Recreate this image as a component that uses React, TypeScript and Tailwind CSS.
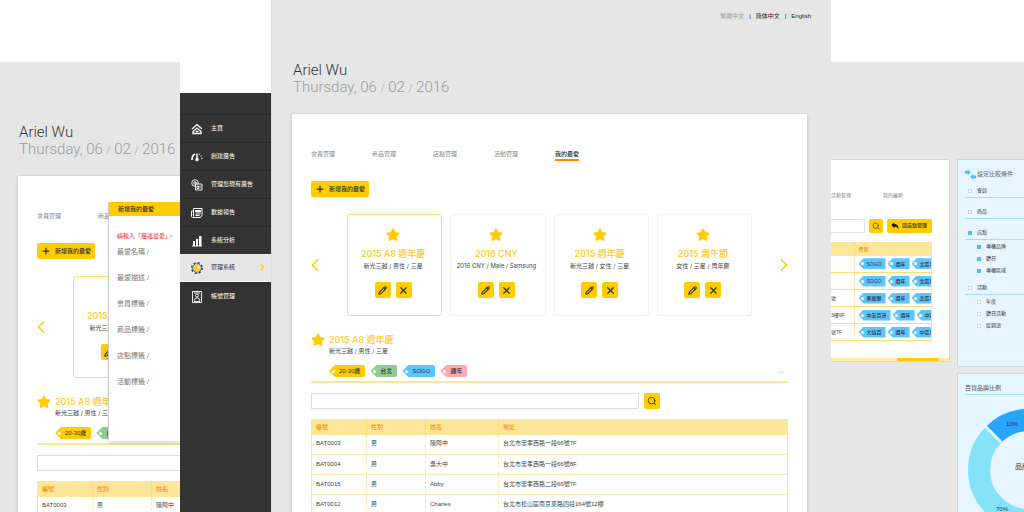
import { ReactNode } from 'react'
import { ChevronDown, ChevronLeft, ChevronRight, Pencil, Plus, Search, Star, X } from 'lucide-react'

interface Favorite {
  title: string
  desc: string
}

interface Member {
  id: string
  gender: string
  name: string
  address: string
}

interface FilterGroup {
  name: string
  checked: boolean
  children: string[]
}

const tabs = ['會員管理', '商品管理', '店點管理', '活動管理', '我的最愛']

const favorites: Favorite[] = [
  { title: '2015 A8 週年慶', desc: '新光三越 / 男性 / 三星' },
  { title: '2016 CNY', desc: '2016 CNY / Male / Samsung' },
  { title: '2015 週年慶', desc: '新光三越 / 女性 / 三星' },
  { title: '2015 端午節', desc: '女性 / 三星 / 周年慶' },
]

const members: Member[] = [
  { id: 'BAT0003', gender: '男', name: '陳阿中', address: '台北市忠孝西路一段66號7F' },
  { id: 'BAT0004', gender: '男', name: '吳大中', address: '台北市忠孝西路一段66號8F' },
  { id: 'BAT0015', gender: '男', name: 'Abby', address: '台北市忠孝西路二段66號7F' },
  { id: 'BAT0012', gender: '男', name: 'Charles', address: '台北市松山區南京東路四段164號12樓' },
]

const formFields = ['最愛名稱', '最愛描述', '會員標籤', '商品標籤', '店點標籤', '活動標籤']

const stores = [
  { address: '', tags: ['SOGO', '週年', '北區專櫃'] },
  { address: '', tags: ['SOGO', '週年', '北區專櫃'] },
  { address: '號', tags: ['美麗華', '週年', '北區專櫃'] },
  { address: '3樓9F', tags: ['中友百貨', '週年', '中區專櫃'] },
  { address: '號7F', tags: ['大遠百', '週年', '中區專櫃'] },
]

const filters: FilterGroup[] = [
  { name: '會員', checked: false, children: [] },
  { name: '商品', checked: false, children: [] },
  { name: '店點', checked: true, children: ['專櫃品牌', '節日', '專櫃區域'] },
  { name: '活動', checked: false, children: ['年度', '節日活動', '促銷語'] },
]

const menu: { name: string; icon: ReactNode }[] = [
  {
    name: '主頁',
    icon: (
      <g strokeWidth="2.6">
        <path d="M2 12 12 3l10 9" />
        <path d="M4 17v4h16v-4l-8-7-8 7Z" />
        <path d="M9 18h6l-3-3Z" fill="currentColor" strokeWidth="1" />
      </g>
    ),
  },
  {
    name: '創建廣告',
    icon: (
      <g>
        <path d="M2 18C2 12 4 8 8 6" strokeWidth="3.4" />
        <path d="M12 5v12" strokeWidth="3" />
        <circle cx="12" cy="17" r="3" fill="currentColor" />
        <path d="M16 6c4 2 6 6 6 12" strokeWidth="2.4" strokeDasharray="2 3" />
      </g>
    ),
  },
  {
    name: '管理您現有廣告',
    icon: (
      <g strokeWidth="1.8">
        <circle cx="8" cy="8" r="6.5" />
        <circle cx="8" cy="8" r="2.5" />
        <path d="M9 10h13v12H9z" fill="#333" />
        <path d="M12 14h3v5h-3zM18 13v6M12 11v1" />
      </g>
    ),
  },
  {
    name: '數據報告',
    icon: (
      <g strokeWidth="2">
        <path d="M5 3h17v14l-3 4H3c-1 0-2-1-2-2V8h4Z" />
        <path d="M5 8v11" />
        <path d="M9 7h10v3H9zM9 14h10M9 17h8" fill="currentColor" />
      </g>
    ),
  },
  {
    name: '系統分析',
    icon: (
      <g fill="currentColor" stroke="none">
        <path d="M4 12h4v9H4zM10 8h4v13h-4zM16 2h5v19h-5zM2 21h20v2H2z" />
      </g>
    ),
  },
  {
    name: '管理系統',
    icon: (
      <g>
        <circle cx="12" cy="12" r="10.6" stroke="#333" strokeWidth="2.8" strokeDasharray="4.2 4.12" />
        <circle cx="12" cy="12" r="8.6" fill="#e6e6e6" stroke="#333" strokeWidth="1.4" />
        <path d="M6 13a6 6 0 0 1 9-6l-3 4 1 3 5-1a6 6 0 0 1-9 4Z" fill="#fc0" stroke="#fc0" />
      </g>
    ),
  },
  {
    name: '帳號管理',
    icon: (
      <g strokeWidth="1.8">
        <path d="M3 1h18v22H3z" />
        <circle cx="12" cy="9" r="3" />
        <path d="M6 4h12M6 20l3-6h6l3 6M6 21h12" />
      </g>
    ),
  },
]

function Tag({ color, children }: { color: string; children: ReactNode }) {
  return (
    <span className={`inline-flex h-3 shrink-0 items-center gap-1 rounded-[2px] pr-[5px] pl-[3px] text-[6px] font-medium whitespace-nowrap text-[#333] [clip-path:polygon(0_50%,6px_0,100%_0,100%_100%,6px_100%)] ${color}`}>
      <span className="size-[3px] rounded-full bg-white" />
      {children}
    </span>
  )
}

function IconButton({ label, children }: { label: string; children: ReactNode }) {
  return (
    <button aria-label={label} className="flex size-4 shrink-0 items-center justify-center rounded-[2px] bg-[#fc0] text-[#333]">
      {children}
    </button>
  )
}

function FavoriteCard({ item, active }: { item: Favorite; active: boolean }) {
  return (
    <div className={`flex h-[102px] flex-col items-center rounded-[3px] border pt-[13px] pr-[3px] ${active ? 'border-[#fddc6b]' : 'border-[#f0f0f0]'}`}>
      <Star className="size-[14px] fill-[#fc0] text-[#fc0]" />
      <div className="mt-[6px] font-[Inter,'Noto_Sans_CJK_TC',sans-serif] text-[9px] leading-3 font-medium whitespace-nowrap text-[#ffc91f]">{item.title}</div>
      <div className="mt-[2px] font-[Inter,'Noto_Sans_CJK_TC',sans-serif] text-[6px] leading-2 whitespace-nowrap text-[#444]">{item.desc}</div>
      <div className="mt-3 flex gap-[5px]">
        <IconButton label="編輯"><Pencil className="size-[9px]" strokeWidth={2.8} /></IconButton>
        <IconButton label="刪除"><X className="size-[11px]" strokeWidth={2.6} /></IconButton>
      </div>
    </div>
  )
}

function MemberTable() {
  return (
    <table className="mt-[10px] w-full table-fixed border-collapse border border-[#fde59a] text-left text-[6px] leading-2 text-[#444]">
      <thead>
        <tr className="h-[15px] bg-[#fde59a] text-[#ff9100]">
          <th className="w-[55px] border-r border-dashed border-[#fdd96b] pl-1 font-medium">編號</th>
          <th className="w-[59px] border-r border-dashed border-[#fdd96b] pl-1 font-medium">性別</th>
          <th className="w-[73px] border-r border-dashed border-[#fdd96b] pl-1 font-medium">姓名</th>
          <th className="pl-1 font-medium">地址</th>
        </tr>
      </thead>
      <tbody>
        {members.map((m) => (
          <tr key={m.id} className="h-5 border-b border-[#fde9ae]">
            <td className="border-r border-dashed border-[#fde59a] pb-[2px] pl-1">{m.id}</td>
            <td className="border-r border-dashed border-[#fde59a] pb-[2px] pl-1">{m.gender}</td>
            <td className="border-r border-dashed border-[#fde59a] pb-[2px] pl-1">{m.name}</td>
            <td className="pb-[2px] pl-1">{m.address}</td>
          </tr>
        ))}
      </tbody>
    </table>
  )
}

function LanguageNav() {
  return (
    <nav className="flex items-center justify-end gap-[5px] text-[6px] text-[#222]">
      <a href="#tw" className="text-[#999]">繁體中文</a>
      <span>|</span>
      <a href="#cn">简体中文</a>
      <span>|</span>
      <a href="#en">English</a>
    </nav>
  )
}

function FavoriteScreen({ children }: { children?: ReactNode }) {
  return (
    <div className="flex min-h-full flex-col">
      <div className="grid h-8">{children}</div>
      <header className="mb-4 pt-[30px] pl-[2px] font-[Roboto,sans-serif] text-[15px] leading-[17px] font-light">
        <h1 className="text-[#333]">Ariel Wu</h1>
        <p className="whitespace-nowrap text-[#999]">
          Thursday, 06 <span className="text-[10px]">/</span> 02 <span className="text-[10px]">/</span> 2016
        </p>
      </header>
      <main className="mr-[3px] flex-1 rounded-t-[2px] border border-[#d6d6d6] bg-white px-[19px] shadow-sm">
        <nav className="flex gap-[37px] pt-[35px] text-[6px] leading-[10px]">
          {tabs.map((t) => (
            <a key={t} href="#tab" className={`border-b-2 whitespace-nowrap ${t === '我的最愛' ? 'border-[#ff8a00] font-medium text-[#333]' : 'border-transparent text-[#888]'}`}>{t}</a>
          ))}
        </nav>
        <button className="mt-5 flex h-4 items-center gap-1 rounded-[2px] bg-[#fc0] pr-1 pl-1 text-[6px] font-medium text-[#333]">
          <Plus className="size-[10px]" strokeWidth={3} />
          新增我的最愛
        </button>
        <section className="mt-[17px] flex items-center gap-7">
          <button aria-label="上一頁" className="w-2 text-[#fc0]"><ChevronLeft className="-ml-[6px] size-5" strokeWidth={2} /></button>
          <div className="grid flex-1 grid-cols-4 gap-2">
            {favorites.map((f, i) => <FavoriteCard key={f.title} item={f} active={i === 0} />)}
          </div>
          <button aria-label="下一頁" className="w-2 text-[#fc0]"><ChevronRight className="-ml-[6px] size-5" strokeWidth={2} /></button>
        </section>
        <section className="mt-[17px] flex items-start gap-1 border-b-2 border-[#fde592] pb-1">
          <Star className="size-[14px] shrink-0 fill-[#fc0] text-[#fc0]" />
          <div className="flex-1 pt-[1px]">
            <h2 className="font-[Inter,'Noto_Sans_CJK_TC',sans-serif] text-[9px] leading-3 font-medium whitespace-nowrap text-[#ffc91f]">2015 A8 週年慶</h2>
            <p className="font-[Inter,'Noto_Sans_CJK_TC',sans-serif] text-[6px] leading-[10px] text-[#444]">新光三越 / 男性 / 三星</p>
            <div className="mt-[9px] flex gap-[5px]">
              <Tag color="bg-[#fc0]">20-30歲</Tag>
              <Tag color="bg-[#93cb97]">台北</Tag>
              <Tag color="bg-[#5cc5ff]">SOGO</Tag>
              <Tag color="bg-[#ffabae]">週年</Tag>
            </div>
          </div>
          <button aria-label="展開" className="self-end pr-[2px] text-[#bbb]"><ChevronDown className="size-[9px]" /></button>
        </section>
        <form className="mt-[10px] flex gap-[5px]">
          <input aria-label="搜尋" className="h-4 w-[328px] border border-[#ddd] px-1 text-[6px]" />
          <IconButton label="搜尋"><Search className="size-[10px]" /></IconButton>
        </form>
        <MemberTable />
      </main>
    </div>
  )
}

function FavoriteForm() {
  return (
    <form className="absolute top-[140px] left-[108px] h-[239px] w-[240px] border-l border-[#ccc] bg-white pl-2 shadow-md">
      <h3 className="-ml-2 flex h-[14px] items-center bg-[#fc0] pl-[9px] text-[6px] font-medium text-[#333]">新增我的最愛</h3>
      <p className="mt-[15px] text-[6px] leading-[10px] whitespace-nowrap text-[#f22]">請輸入「描述最愛」。</p>
      <div className="mt-[6px] flex flex-col gap-4">
        {formFields.map((f) => (
          <label key={f} className="flex h-[10px] items-center text-[7px] text-[#777]">
            {f} /
            <input className="ml-1 w-20" />
          </label>
        ))}
      </div>
    </form>
  )
}

function Sidebar() {
  return (
    <aside className="mt-[93px] w-[91px] shrink-0 bg-[#333] pt-[21px]">
      {menu.map((m) => {
        const active = m.name === '管理系統'
        return (
          <a key={m.name} href="#menu" className={`flex h-7 items-center gap-2 pr-1 pl-[11px] text-[6px] whitespace-nowrap ${active ? 'border-b border-white bg-[#e6e6e6] text-[#333]' : 'border-t border-[#2a2a2a] text-white'}`}>
            <svg viewBox="0 0 24 24" className="size-3 shrink-0" fill="none" stroke="currentColor">{m.icon}</svg>
            <span className="flex-1">{m.name}</span>
            {active ? <ChevronRight className="size-[9px] text-[#fc0]" strokeWidth={3} /> : null}
          </a>
        )
      })}
    </aside>
  )
}

function StoreCard() {
  return (
    <div className="flex h-[203px] w-[119px] shrink-0 flex-col overflow-hidden rounded-r-[2px] border-y border-r border-[#d6d6d6] bg-white">
      <nav className="flex gap-8 pt-[30px] text-[5px] leading-[10px] text-[#888]">
        <a href="#event">活動管理</a>
        <a href="#fav">我的最愛</a>
      </nav>
      <form className="mt-[19px] flex h-[14px] gap-1 pr-[17px]">
        <input aria-label="搜尋店點" className="min-w-0 flex-1 border border-l-0 border-[#e2e2e2] text-[5px]" />
        <button aria-label="搜尋" className="flex w-[14px] items-center justify-center rounded-[2px] bg-[#fc0] text-[#333]"><Search className="size-2" /></button>
        <button className="flex items-center gap-[3px] rounded-[2px] bg-[#fc0] pr-[5px] pl-1 text-[5px] font-medium whitespace-nowrap text-[#333]">
          <svg viewBox="0 0 24 24" className="size-2" fill="#222"><path d="M1 9 10 1v5c8 0 13 5 13 16-3-6-7-8-13-8v5Z" /></svg>
          回店點管理
        </button>
      </form>
      <div className="mt-[9px] pr-[17px]">
        <table className="w-full table-fixed border-collapse border border-l-0 border-[#fde59a] text-left text-[5px] leading-2 text-[#444]">
          <thead>
            <tr className="h-[13px] bg-[#fde59a] text-[#ff9100]">
              <th aria-label="地址" className="w-[23px] border-r border-dashed border-[#fdd96b]" />
              <th className="pl-1 font-medium">標籤</th>
            </tr>
          </thead>
          <tbody>
            {stores.map((s, i) => (
              <tr key={i} className="h-[17px] border-b border-[#fddc7a]">
                <td className="border-r border-dashed border-[#fde59a] whitespace-nowrap">{s.address}</td>
                <td className="overflow-hidden pl-1">
                  <div className="flex gap-[2px]">
                    {s.tags.map((t) => (
                      <span key={t} className="inline-flex h-[11px] shrink-0 items-center gap-[3px] bg-[#5cc5ff] pr-1 pl-[2px] font-medium text-[#333] [clip-path:polygon(0_50%,5px_0,100%_0,100%_100%,5px_100%)]">
                        <span className="size-[3px] rounded-full bg-white" />
                        {t}
                      </span>
                    ))}
                  </div>
                </td>
              </tr>
            ))}
          </tbody>
        </table>
      </div>
      <div className="mt-auto flex h-[3px] shrink-0 justify-end bg-[#fdeba8] pr-[10px]">
        <div className="w-[42px] bg-[#fc0]" />
      </div>
    </div>
  )
}

function CheckItem({ name, checked }: { name: string; checked: boolean }) {
  return (
    <label className="flex h-3 items-center gap-[5px] text-[5px] whitespace-nowrap text-[#333]">
      <input type="checkbox" defaultChecked={checked} className="size-1 appearance-none border border-[#ccdbe3] bg-white checked:border-[#4dbdf7] checked:bg-[#4dbdf7]" />
      {name}
    </label>
  )
}

function FilterPanel() {
  return (
    <section className="h-[208px] overflow-hidden rounded-l-[2px] border border-r-0 border-[#c9d5dc] bg-[#e6f5ff] pt-[7px] pl-[7px]">
      <h3 className="mb-1 flex h-[14px] items-center gap-[1px] text-[6px] whitespace-nowrap text-[#666]">
        <svg viewBox="0 0 24 24" className="size-[11px]" fill="#4dbdf7">
          <path d="M0 4h6V1l7 6-7 6v-3H0zM24 14h-6v-3l-7 6 7 6v-3h6z" />
        </svg>
        設定比較條件
      </h3>
      {filters.map((g) => (
        <div key={g.name} className={g.children.length ? 'mb-[5px]' : 'mb-2'}>
          <div className="border-b border-[#a5dcff] pl-[3px]">
            <CheckItem name={g.name} checked={g.checked} />
          </div>
          <div className="pt-[1px] pl-3 empty:hidden">
            {g.children.map((c) => <CheckItem key={c} name={c} checked={g.checked} />)}
          </div>
        </div>
      ))}
    </section>
  )
}

function RatioPanel() {
  return (
    <section className="flex-1 overflow-hidden rounded-tl-[2px] border-t border-l border-[#c9d5dc] bg-[#e6f5ff] pl-[7px]">
      <h3 className="mt-[9px] border-b border-[#a5dcff] pb-[1px] text-[6px] leading-[10px] whitespace-nowrap text-[#555]">百貨品牌比例</h3>
      <svg viewBox="0 0 128 128" className="mt-[11px] ml-[1px] h-32 w-32 max-w-none" fontSize="6" fill="#333" textAnchor="middle">
        <circle cx="63" cy="64" r="50" fill="none" stroke="#85e2f8" strokeWidth="22" />
        <path d="M27.6 28.6A50 50 0 0 1 98.4 28.6" fill="none" stroke="#29a5ff" strokeWidth="22" />
        <path d="M18 19 37 38" stroke="#e6f5ff" strokeWidth="3" />
        <text x="46" y="20">10%</text>
        <text x="36" y="105">70%</text>
        <text x="63" y="63" fontSize="7">品牌比例</text>
      </svg>
    </section>
  )
}

export default function App() {
  return (
    <div className="flex h-screen overflow-hidden bg-white font-['Liberation_Sans','Noto_Sans_CJK_TC',sans-serif]">
      <div className="relative mt-[62px] w-[180px] shrink-0 overflow-hidden bg-[#e6e6e6]">
        <div className="h-full w-[537px] pl-[17px]">
          <FavoriteScreen />
        </div>
        <FavoriteForm />
      </div>
      <Sidebar />
      <div className="min-w-0 flex-1 overflow-hidden border-l border-[#ddd] bg-[#e6e6e6] pr-5 pl-[19px]">
        <FavoriteScreen>
          <LanguageNav />
        </FavoriteScreen>
      </div>
      <div className="mt-[62px] flex w-[193px] shrink-0 items-start gap-[7px] overflow-hidden bg-[#e6e6e6] pt-[97px]">
        <StoreCard />
        <div className="flex min-h-full min-w-0 flex-1 flex-col gap-[6px]">
          <FilterPanel />
          <RatioPanel />
        </div>
      </div>
    </div>
  )
}
